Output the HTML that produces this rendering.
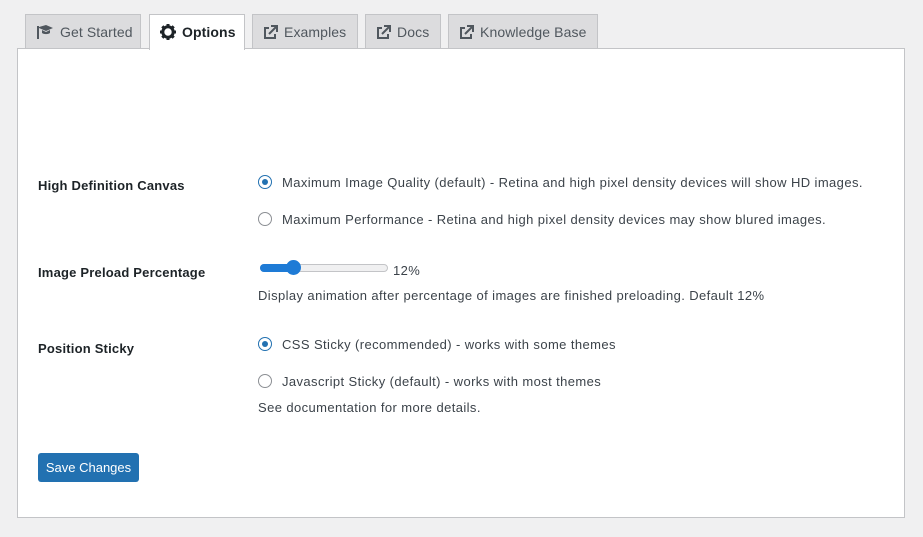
<!DOCTYPE html>
<html><head><style>
body{margin:0;background:#f0f0f1;font-family:"Liberation Sans",sans-serif;font-size:13px;letter-spacing:0.4px;color:#3c434a;width:923px;height:537px;position:relative;overflow:hidden}
.tab{position:absolute;top:14px;height:34px;background:#dcdcde;border:1px solid #c3c4c7;border-bottom:none;box-sizing:border-box;font-size:14px;font-weight:normal;letter-spacing:0.1px;color:#50575e;line-height:34px;padding-left:10px}
.tab svg{vertical-align:-3px;margin-right:6px}
.panel{position:absolute;left:17px;top:48px;width:888px;height:470px;background:#fff;border:1px solid #c3c4c7;box-sizing:border-box}
.lbl{position:absolute;left:38px;font-weight:600;color:#1d2327;font-size:13px;letter-spacing:0.2px}
.t{position:absolute;left:282px;color:#3c434a}
.radio{position:absolute;left:258px;width:14px;height:14px;border:1px solid #8c8f94;border-radius:50%;box-sizing:border-box;background:#fff}
.radio.on{border-color:#2271b1}
.radio.on::after{content:"";position:absolute;left:3px;top:3px;width:6px;height:6px;border-radius:50%;background:#2271b1}
</style></head><body>
<div class="tab" style="left:25px;width:116px"><svg width="18" height="16" viewBox="0 0 18 16"><path d="M2 2v13" stroke="#50575e" stroke-width="2"/><path d="M3 3l7-2 7 3-7 3-7-3z M6 6v3c2 1.5 6 1.5 8 0V6l-4 2z" fill="#50575e"/></svg>Get Started</div>
<div class="tab" style="left:149px;width:96px;height:36px;background:#fff;color:#1d2327;z-index:2;font-weight:600"><svg width="16" height="16" viewBox="0 0 16 16"><circle cx="8" cy="8" r="5.2" fill="none" stroke="#1d2327" stroke-width="3"/><g stroke="#1d2327" stroke-width="3"><path d="M8 0v3M8 13v3M0 8h3M13 8h3M2.3 2.3l2 2M11.7 11.7l2 2M2.3 13.7l2-2M11.7 4.3l2-2"/></g></svg>Options</div>
<div class="tab" style="left:252px;width:106px"><svg width="15" height="15" viewBox="0 0 15 15"><path d="M6 3H2v10h10V9" fill="none" stroke="#50575e" stroke-width="2"/><path d="M8 1h6v6M14 1L6 9" fill="none" stroke="#50575e" stroke-width="2"/></svg>Examples</div>
<div class="tab" style="left:365px;width:76px"><svg width="15" height="15" viewBox="0 0 15 15"><path d="M6 3H2v10h10V9" fill="none" stroke="#50575e" stroke-width="2"/><path d="M8 1h6v6M14 1L6 9" fill="none" stroke="#50575e" stroke-width="2"/></svg>Docs</div>
<div class="tab" style="left:448px;width:150px"><svg width="15" height="15" viewBox="0 0 15 15"><path d="M6 3H2v10h10V9" fill="none" stroke="#50575e" stroke-width="2"/><path d="M8 1h6v6M14 1L6 9" fill="none" stroke="#50575e" stroke-width="2"/></svg>Knowledge Base</div>
<div class="panel"></div>
<div class="lbl" style="top:178px">High Definition Canvas</div>
<div class="radio on" style="top:175px"></div><div class="t" style="top:175px">Maximum Image Quality (default) - Retina and high pixel density devices will show HD images.</div>
<div class="radio" style="top:212px"></div><div class="t" style="top:212px">Maximum Performance - Retina and high pixel density devices may show blured images.</div>
<div class="lbl" style="top:265px">Image Preload Percentage</div>
<div style="position:absolute;left:260px;top:264px;width:126px;height:6px;border:1px solid #c3c4c7;border-radius:4px;background:#f0f0f1"></div>
<div style="position:absolute;left:260px;top:264px;width:34px;height:8px;border-radius:4px;background:#1e7bd6"></div>
<div style="position:absolute;left:286px;top:260px;width:15px;height:15px;border-radius:50%;background:#1e7bd6"></div>
<div style="position:absolute;left:393px;top:263px">12%</div>
<div style="position:absolute;left:258px;top:288px">Display animation after percentage of images are finished preloading. Default 12%</div>
<div class="lbl" style="top:341px">Position Sticky</div>
<div class="radio on" style="top:337px"></div><div class="t" style="top:337px">CSS Sticky (recommended) - works with some themes</div>
<div class="radio" style="top:374px"></div><div class="t" style="top:374px">Javascript Sticky (default) - works with most themes</div>
<div style="position:absolute;left:258px;top:400px">See documentation for more details.</div>
<div style="position:absolute;left:38px;top:453px;width:101px;height:29px;background:#2271b1;border-radius:3px;color:#fff;font-size:13px;letter-spacing:0;line-height:29px;text-align:center">Save Changes</div>
</body></html>
